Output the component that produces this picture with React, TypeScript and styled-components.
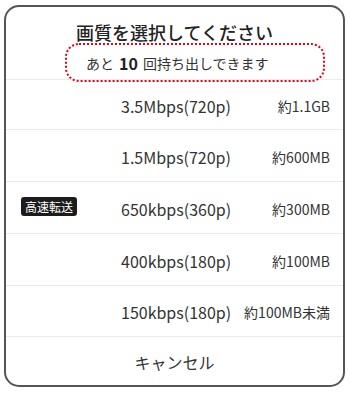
import React from "react";
import styled, { createGlobalStyle } from "styled-components";

const Global = createGlobalStyle`
  html, body { margin: 0; padding: 0; background: #fff; }
  body { font-family: "Noto Sans CJK JP", "Noto Sans", sans-serif; color: #333; }
  * { box-sizing: border-box; }
`;

const Page = styled.div`
  padding: 5px 0 0 4px;
`;

const Card = styled.div`
  width: 341px;
  height: 382px;
  border: 2px solid #555;
  border-radius: 15px;
  background: #fff;
  display: flex;
  flex-direction: column;
  overflow: hidden;
`;

const Header = styled.div`
  display: flex;
  flex-direction: column;
  padding-top: 14px;
  border-bottom: 1px solid #ebebeb;
`;

const Title = styled.div`
  font-size: 18px;
  line-height: 22px;
  font-weight: 500;
  color: #222;
  text-align: center;
`;

const Remaining = styled.div`
  position: relative;
  z-index: 1;
  margin: 0 0 -3px 59px;
  width: 260px;
  height: 39px;
  border: 2px dotted #e60012;
  border-radius: 14px;
  display: flex;
  align-items: center;
  padding-left: 19px;
  font-size: 14px;
  color: #333;
`;

const Count = styled.b`
  font-size: 16px;
  font-weight: 700;
  color: #222;
  margin: 0 5px 0 5px;
`;

const Row = styled.div<{ $h: number }>`
  height: ${(p) => p.$h}px;
  flex: none;
  display: grid;
  grid-template-columns: 100px 1fr auto;
  align-items: center;
  padding: 2px 13px 0 15px;
  border-bottom: 1px solid #ebebeb;
`;

const BadgeCell = styled.div`
  display: flex;
  align-items: center;
`;

const Badge = styled.span`
  display: inline-block;
  background: #1c1c1c;
  color: #fff;
  font-size: 12px;
  line-height: 19px;
  height: 19px;
  padding: 0 4px;
  border-radius: 3px;
  margin-top: -5px;
`;

const Rate = styled.span`
  font-size: 16px;
  color: #333;
`;

const Size = styled.span`
  font-size: 14px;
  color: #333;
  text-align: right;
`;

const Cancel = styled.div`
  flex: 1;
  display: flex;
  align-items: center;
  justify-content: center;
  font-size: 16px;
  color: #333;
  padding-top: 2px;
`;

const options = [
  { rate: "3.5Mbps(720p)", size: "約1.1GB", h: 50 },
  { rate: "1.5Mbps(720p)", size: "約600MB", h: 52 },
  { rate: "650kbps(360p)", size: "約300MB", h: 52, badge: "高速転送" },
  { rate: "400kbps(180p)", size: "約100MB", h: 52 },
  { rate: "150kbps(180p)", size: "約100MB未満", h: 51 },
];

export default function App() {
  return (
    <Page>
      <Global />
      <Card>
        <Header>
          <Title>画質を選択してください</Title>
          <Remaining>
            あと<Count>10</Count>回持ち出しできます
          </Remaining>
        </Header>
        {options.map((o) => (
          <Row key={o.rate} $h={o.h}>
            <BadgeCell>{o.badge ? <Badge>{o.badge}</Badge> : null}</BadgeCell>
            <Rate>{o.rate}</Rate>
            <Size>{o.size}</Size>
          </Row>
        ))}
        <Cancel>キャンセル</Cancel>
      </Card>
    </Page>
  );
}
